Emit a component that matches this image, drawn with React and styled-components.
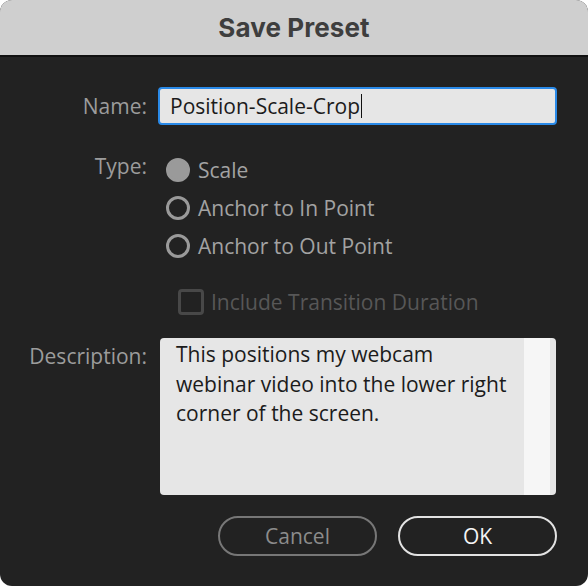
import React from 'react';
import styled, { createGlobalStyle } from 'styled-components';

const GlobalStyle = createGlobalStyle`
  html, body {
    margin: 0;
    padding: 0;
    background: #ffffff;
  }
  * { box-sizing: border-box; }
`;

const Window = styled.div`
  width: 588px;
  height: 586px;
  border-radius: 12px;
  overflow: hidden;
  background: #222222;
  display: flex;
  flex-direction: column;
  font-family: "Open Sans", "Noto Sans", sans-serif;
`;

const TitleBar = styled.div`
  height: 57px;
  flex: none;
  background: #cfcfcf;
  border-bottom: 2px solid #111111;
  display: flex;
  align-items: center;
  justify-content: center;
  font-family: Inter, "Liberation Sans", sans-serif;
  font-weight: 700;
  font-size: 26px;
  letter-spacing: 0.1px;
  color: #3e3e3e;
`;

const Body = styled.div`
  flex: 1;
  display: grid;
  grid-template-columns: 147px 1fr;
  column-gap: 11px;
  padding: 30px 31px 0 0;
  align-content: start;
`;

const Label = styled.div`
  text-align: right;
  font-size: 21px;
  color: #9c9c9c;
  line-height: ${p => p.$lh || '38px'};
  margin-top: ${p => p.$mt || '0'};
`;

const NameInput = styled.div`
  height: 38px;
  border: 2px solid #2a8ae8;
  border-radius: 4px;
  background: #e6e6e6;
  display: flex;
  align-items: center;
  padding-left: 10px;
  font-size: 21px;
  color: #1b1b1b;
`;

const Caret = styled.span`
  display: inline-block;
  width: 1px;
  height: 24px;
  background: #111;
  margin-left: 1px;
`;

const RadioGroup = styled.div`
  display: flex;
  flex-direction: column;
  margin-top: 26px;
  padding-left: 8px;
`;

const RadioRow = styled.div`
  height: 38px;
  display: flex;
  align-items: center;
  gap: 8px;
  font-size: 21px;
  color: #a3a3a3;
`;

const RadioDot = styled.span`
  width: 24px;
  height: 24px;
  border-radius: 50%;
  border: 3px solid #9a9a9a;
  background: ${p => (p.$checked ? '#9a9a9a' : 'transparent')};
  flex: none;
`;

const CheckRow = styled.div`
  grid-column: 2;
  height: 38px;
  margin-top: 18px;
  padding-left: 20px;
  display: flex;
  align-items: center;
  gap: 7px;
  font-size: 21px;
  color: #575757;
`;

const CheckBox = styled.span`
  width: 26px;
  height: 26px;
  border: 3px solid #484848;
  border-radius: 4px;
  flex: none;
`;

const DescBox = styled.div`
  margin-top: 17px;
  height: 157px;
  border-radius: 4px;
  background: #e6e6e6;
  display: flex;
  margin-left: 2px;
  margin-right: 1px;
`;

const DescText = styled.div`
  flex: 1;
  padding: 2px 12px 0 16px;
  font-size: 21px;
  line-height: 29.5px;
  color: #1b1b1b;
`;

const ScrollTrack = styled.div`
  width: 26px;
  margin-right: 6px;
  background: #f6f6f6;
`;

const Buttons = styled.div`
  grid-column: 2;
  display: flex;
  justify-content: flex-end;
  gap: 21px;
  margin-top: 21px;
`;

const Button = styled.div`
  width: 159px;
  height: 40px;
  border-radius: 20px;
  border: 2px solid ${p => (p.$primary ? '#e2e2e2' : '#777777')};
  color: ${p => (p.$primary ? '#f4f4f4' : '#8c8c8c')};
  display: flex;
  align-items: center;
  justify-content: center;
  font-size: 21px;
`;

const App = () => {
  return (
    <>
      <GlobalStyle />
      <Window>
        <TitleBar>Save Preset</TitleBar>
        <Body>
          <Label>Name:</Label>
          <NameInput>
            Position-Scale-Crop
            <Caret />
          </NameInput>

          <Label $mt="22px">Type:</Label>
          <RadioGroup>
            <RadioRow><RadioDot $checked />Scale</RadioRow>
            <RadioRow><RadioDot />Anchor to In Point</RadioRow>
            <RadioRow><RadioDot />Anchor to Out Point</RadioRow>
          </RadioGroup>

          <CheckRow>
            <CheckBox />
            Include Transition Duration
          </CheckRow>

          <Label $mt="17px" $lh="36px">Description:</Label>
          <DescBox>
            <DescText>
              This positions my webcam webinar video into the lower right corner of the screen.
            </DescText>
            <ScrollTrack />
          </DescBox>

          <Buttons>
            <Button>Cancel</Button>
            <Button $primary>OK</Button>
          </Buttons>
        </Body>
      </Window>
    </>
  );
};

export default App;
